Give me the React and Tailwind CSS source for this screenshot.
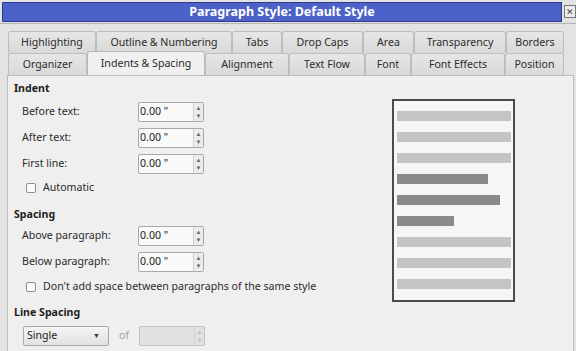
import React from "react";

const row1 = [
  ["Highlighting", 88],
  ["Outline & Numbering", 136],
  ["Tabs", 50],
  ["Drop Caps", 81],
  ["Area", 51],
  ["Transparency", 92],
  ["Borders", 58],
];

const row2 = [
  ["Organizer", 79],
  ["Indents & Spacing", 118],
  ["Alignment", 84],
  ["Text Flow", 76],
  ["Font", 46],
  ["Font Effects", 94],
  ["Position", 59],
];

function Tab({ label, width, active }) {
  return (
    <div
      style={{ width }}
      className={
        active
          ? "relative z-10 -mt-[2px] flex h-[24px] items-center justify-center rounded-t-[3px] border border-b-0 border-[#b9b9b9] bg-[#f0f0f0] text-[#2b2b2b]"
          : "flex h-[22px] items-center justify-center rounded-t-[3px] border border-b-0 border-[#bdbdbd] bg-gradient-to-b from-[#e6e6e6] to-[#d9d9d9] text-[#2b2b2b]"
      }
    >
      {label}
    </div>
  );
}

function SpinBox({ disabled }) {
  return (
    <div
      className={
        disabled
          ? "flex h-[20px] w-[66px] rounded-[2px] border border-[#c4c4c4] bg-[#e1e1e1]"
          : "flex h-[20px] w-[66px] rounded-[2px] border border-[#a9a9a9] bg-[#f9f9f9]"
      }
    >
      <div className="flex flex-1 items-center pl-[1px] text-[#222]">
        {disabled ? "" : '0.00 "'}
      </div>
      <div
        className={
          disabled
            ? "flex w-[10px] flex-col items-center justify-center border-l border-[#cfcfcf] text-[6px] leading-[8px] text-[#bdbdbd]"
            : "flex w-[10px] flex-col items-center justify-center border-l border-[#d0d0d0] bg-[#ececec] text-[6px] leading-[8px] text-[#666]"
        }
      >
        <span>▲</span>
        <span>▼</span>
      </div>
    </div>
  );
}

function Field({ label }) {
  return (
    <div className="flex h-[20px] items-center">
      <span className="w-[130px] shrink-0 pl-[14px] text-[#2b2b2b]">{label}</span>
      <SpinBox />
    </div>
  );
}

function Check({ label }) {
  return (
    <div className="flex h-[20px] items-center pl-[18px]">
      <span className="h-[10px] w-[10px] rounded-[2px] border border-[#8e8e8e] bg-[#fbfbfb]" />
      <span className="ml-[7px] text-[#2b2b2b]">{label}</span>
    </div>
  );
}

function Heading({ children, className }) {
  return (
    <div className={"flex h-[16px] items-center pl-[6px] font-bold text-[#1e1e1e] " + (className || "")}>
      {children}
    </div>
  );
}

const bars = [
  [114, "light"],
  [114, "light"],
  [114, "light"],
  [91, "dark"],
  [103, "dark"],
  [57, "dark"],
  [114, "light"],
  [114, "light"],
  [114, "light"],
];

export default function App() {
  return (
    <div
      className="h-[351px] w-[576px] overflow-hidden bg-[#e3e3e3] text-[10.6px]"
      style={{ fontFamily: '"Noto Sans", "Open Sans", sans-serif' }}
    >
      {/* title bar */}
      <div className="flex h-[24px] items-start border-b border-[#b5b5b5] pt-[2px] pl-[2px]">
        <div className="flex h-[20px] w-[564px] items-center justify-center border border-[#2d3b8c] bg-[#4c62c8] text-[12.5px] font-bold text-white">
          Paragraph Style: Default Style
        </div>
        <div className="ml-[2px] mt-[3px] flex h-[13px] w-[12px] items-center justify-center border border-[#777] bg-[#ececec] text-[9px] leading-none text-[#444]">
          ✕
        </div>
      </div>

      {/* tabs */}
      <div className="pl-[8px] pt-[5px]">
        <div className="flex h-[24px] items-end">
          {row1.map(([l, w]) => (
            <Tab key={l} label={l} width={w} />
          ))}
        </div>
        <div className="flex h-[22px] items-end">
          {row2.map(([l, w]) => (
            <Tab key={l} label={l} width={w} active={l === "Indents & Spacing"} />
          ))}
        </div>
      </div>

      {/* panel */}
      <div className="ml-[7px] flex h-[290px] w-[567px] border border-[#bcbcbc] bg-[#efefef]">
        <div className="flex w-[384px] flex-col pt-[5px]">
          <Heading>Indent</Heading>
          <div className="mt-[5px] flex flex-col gap-[6px]">
            <Field label="Before text:" />
            <Field label="After text:" />
            <Field label="First line:" />
          </div>
          <div className="mt-[4px]">
            <Check label="Automatic" />
          </div>
          <Heading className="mt-[9px]">Spacing</Heading>
          <div className="mt-[3px] flex flex-col gap-[6px]">
            <Field label="Above paragraph:" />
            <Field label="Below paragraph:" />
          </div>
          <div className="mt-[5px]">
            <Check label="Don't add space between paragraphs of the same style" />
          </div>
          <Heading className="mt-[8px]">Line Spacing</Heading>
          <div className="mt-[5px] flex h-[20px] items-center pl-[15px]">
            <div className="flex h-[20px] w-[86px] items-center justify-between rounded-[2px] border border-[#a9a9a9] bg-gradient-to-b from-[#f4f4f4] to-[#e2e2e2] pl-[3px] pr-[8px] text-[#222]">
              <span>Single</span>
              <span className="text-[7px] text-[#333]">▼</span>
            </div>
            <span className="ml-[10px] w-[20px] text-[#a0a0a0]">of</span>
            <SpinBox disabled />
          </div>
        </div>

        {/* preview */}
        <div className="mt-[23px] flex h-[203px] w-[123px] flex-col gap-[11px] border-2 border-[#4a4a4a] bg-[#f6f6f6] pl-[3px] pt-[10px]">
          {bars.map(([w, t], i) => (
            <div
              key={i}
              style={{ width: w }}
              className={t === "dark" ? "h-[10px] shrink-0 bg-[#8a8a8a]" : "h-[10px] shrink-0 bg-[#c4c4c4]"}
            />
          ))}
        </div>
      </div>
    </div>
  );
}
